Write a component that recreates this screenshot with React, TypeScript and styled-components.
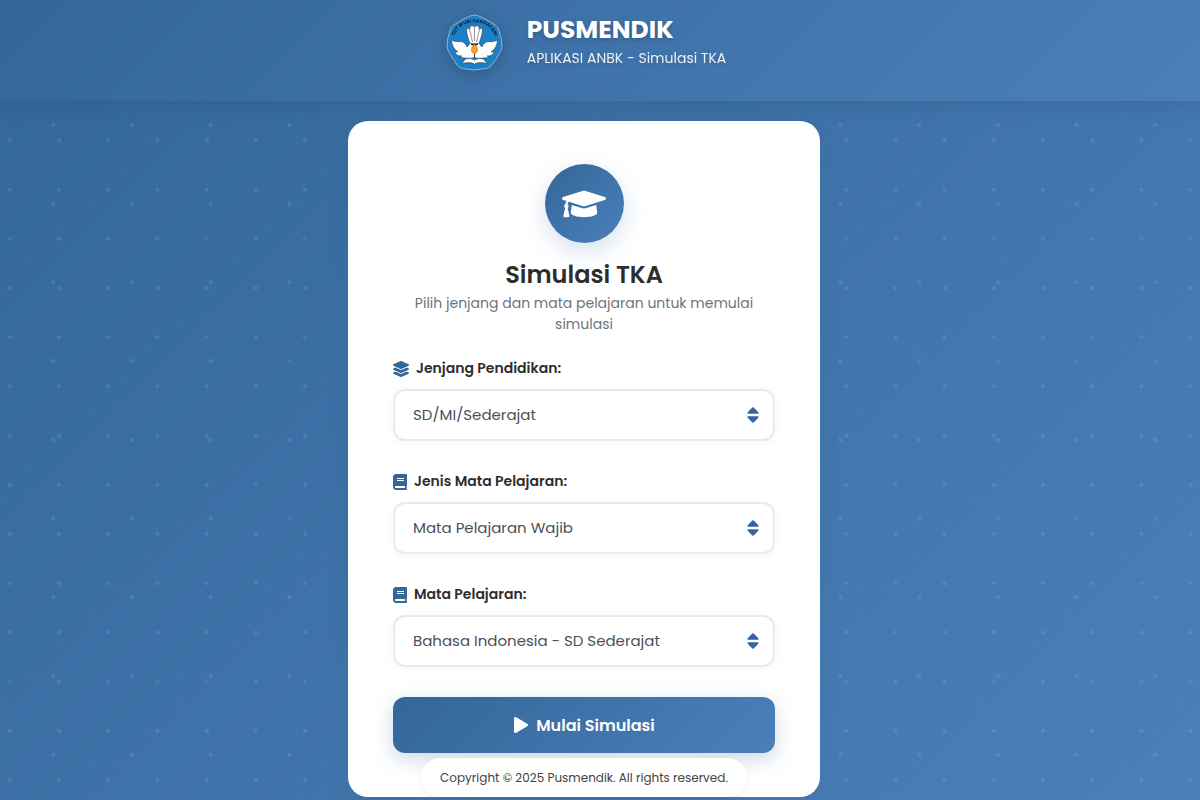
import React from "react";
import styled, { createGlobalStyle } from "styled-components";
import type { IconType } from "react-icons";
import { FaBook, FaGraduationCap, FaLayerGroup, FaPlay, FaSort } from "react-icons/fa";

const GlobalStyle = createGlobalStyle`
  *, *::before, *::after { box-sizing: border-box; }
  body {
    margin: 0;
    font-family: Poppins, Inter, "Open Sans", sans-serif;
    color: #2d2d2d;
  }
`;

const brandGradient = "linear-gradient(135deg, #336799 0%, #4a7fba 100%)";

const Page = styled.div`
  min-height: 100vh;
  display: flex;
  flex-direction: column;
  background: ${brandGradient};
`;

const Header = styled.header`
  position: relative;
  z-index: 1;
  display: flex;
  justify-content: center;
  padding: 14px 28px 30px 0;
  background: ${brandGradient};
  box-shadow: 0 4px 20px rgba(0, 0, 0, 0.1);
`;

const Brand = styled.div`
  display: flex;
  align-items: flex-start;
  gap: 24px;
`;

const Logo = styled.svg`
  width: 57px;
  height: 57px;
  filter: drop-shadow(0 4px 8px rgba(0, 0, 0, 0.2));
`;

const BrandText = styled.div`
  color: #fff;
  text-shadow: 0 2px 4px rgba(0, 0, 0, 0.2);
`;

const BrandName = styled.h1`
  margin: 0;
  font-size: 25px;
  line-height: 32px;
  font-weight: 700;
`;

const BrandSub = styled.p`
  margin: 0;
  padding-top: 2px;
  font-size: 14px;
  line-height: 20px;
  opacity: 0.9;
`;

const Main = styled.main`
  position: relative;
  flex: 1;
  display: flex;
  justify-content: center;
  align-items: flex-start;
  padding: 20px 32px 3px 0;
`;

const Dots = styled.svg`
  position: absolute;
  inset: 0;
  width: 100%;
  height: 100%;
`;

const Card = styled.section`
  position: relative;
  width: 100%;
  max-width: 472px;
  display: flex;
  flex-direction: column;
  align-items: center;
  padding: 43px 45px 0;
  border-radius: 20px;
  background: #fff;
  box-shadow: 0 8px 30px rgba(0, 0, 0, 0.04);
`;

const Emblem = styled.div`
  width: 79px;
  height: 79px;
  display: flex;
  align-items: center;
  justify-content: center;
  border-radius: 50%;
  color: #fff;
  font-size: 44px;
  background: ${brandGradient};
  box-shadow: 0 8px 25px rgba(51, 102, 153, 0.2);
`;

const Title = styled.h2`
  margin: 16px 0 0;
  font-size: 24px;
  line-height: 32px;
  font-weight: 600;
`;

const Lead = styled.p`
  margin: 2px 0 0;
  padding: 0 16px;
  font-size: 14px;
  line-height: 21px;
  text-align: center;
  color: #6c757d;
`;

const Form = styled.form`
  width: 100%;
  display: flex;
  flex-direction: column;
  gap: 30px;
  margin-top: 23px;
`;

const Field = styled.div`
  display: flex;
  flex-direction: column;
  gap: 10px;
`;

const Label = styled.label<{ $iconWidth: number }>`
  display: flex;
  align-items: center;
  gap: 7px;
  font-size: 14px;
  line-height: 21px;
  font-weight: 600;

  svg {
    width: ${({ $iconWidth }) => $iconWidth}px;
    height: 16px;
    color: #336699;
  }
`;

const SelectBox = styled.div`
  position: relative;

  svg {
    position: absolute;
    right: 12px;
    top: 50%;
    transform: translateY(-50%);
    color: #336699;
    font-size: 20px;
    pointer-events: none;
  }
`;

const Select = styled.select`
  display: block;
  width: 100%;
  height: 52px;
  padding: 0 40px 2px 18px;
  border: 2px solid #e6ebf3;
  border-radius: 12px;
  appearance: none;
  background: #fff;
  color: #495057;
  font-family: inherit;
  font-size: 15px;
  box-shadow: 0 2px 8px rgba(51, 102, 153, 0.06);
`;

const StartButton = styled.button`
  display: flex;
  align-items: center;
  justify-content: center;
  gap: 7px;
  height: 56px;
  border: 0;
  border-radius: 12px;
  color: #fff;
  font-family: inherit;
  font-size: 16px;
  font-weight: 600;
  background: ${brandGradient};
  box-shadow: 0 6px 20px rgba(51, 102, 153, 0.25);
`;

const Footer = styled.footer`
  position: relative;
  margin-top: 5px;
  padding: 0 19px;
  border-radius: 20px;
  background: #fff;
  box-shadow: 0 2px 10px rgba(0, 0, 0, 0.06);
  font-size: 12px;
  line-height: 39px;
  color: #444;
  white-space: nowrap;
`;

type FieldData = { id: string; label: string; icon: IconType; iconWidth: number; value: string };

const fields: FieldData[] = [
  { id: "jenjang", label: "Jenjang Pendidikan:", icon: FaLayerGroup, iconWidth: 16, value: "SD/MI/Sederajat" },
  { id: "jenis", label: "Jenis Mata Pelajaran:", icon: FaBook, iconWidth: 14, value: "Mata Pelajaran Wajib" },
  { id: "mapel", label: "Mata Pelajaran:", icon: FaBook, iconWidth: 14, value: "Bahasa Indonesia - SD Sederajat" },
];

function DotPattern() {
  return (
    <Dots aria-hidden="true">
      <defs>
        <pattern id="dots-large" width="50" height="50" patternUnits="userSpaceOnUse" patternTransform="scale(.984)">
          <circle cx="10" cy="40" r="2.1" fill="#fff" fillOpacity=".1" />
        </pattern>
        <pattern id="dots-medium" width="80" height="80" patternUnits="userSpaceOnUse" patternTransform="scale(.984)">
          <rect x="52.3" y="22.5" width="3.6" height="3.6" fill="#fff" fillOpacity=".1" />
        </pattern>
        <pattern id="dots-small" width="30" height="30" patternUnits="userSpaceOnUse" patternTransform="scale(.984)">
          <circle cx="2" cy="12.5" r="1.1" fill="#fff" fillOpacity=".06" />
        </pattern>
      </defs>
      <rect width="100%" height="100%" fill="url(#dots-large)" />
      <rect width="100%" height="100%" fill="url(#dots-medium)" />
      <rect width="100%" height="100%" fill="url(#dots-small)" />
    </Dots>
  );
}

function Crest() {
  return (
    <Logo viewBox="0 0 57 57" role="img" aria-label="Tut Wuri Handayani">
      <defs>
        <path id="motto-arc" d="M7 25.500 Q12 8.500 28.500 8.500 Q45 8.500 50 25.500" />
      </defs>
      <path
        d="M28.500 1 Q35 1.500 50 11.500 Q52 13 52.500 15 Q56 25 56 32 Q56 35 54 38 Q50 46 45 52 Q43 54 40 54.500 Q28.500 57.500 17 54.500 Q14 54 12 52 Q7 46 3 38 Q1 35 1 32 Q1 25 4.500 15 Q5 13 7 11.500 Q22 1.500 28.500 1Z"
        fill="#1c80c8"
        stroke="#8db3d6"
        strokeWidth="1"
      />
      <text fontFamily="Inter, sans-serif" fontSize="4.6" fontWeight="800" fill="#10202c" textAnchor="middle">
        <textPath href="#motto-arc" startOffset="50%">TUT WURI HANDAYANI</textPath>
      </text>
      <g fill="#fff" stroke="#2b2b2b" strokeWidth=".5" strokeLinejoin="round">
        <path d="M20.500 14 L23.500 15 L25 11.500 L28.500 12.500 L32 11.500 L33.500 15 L36.500 14 L36 20 L33 30 H24 L21 20Z" />
        <path d="M23.500 15 L26.500 28 M33.500 15 L30.500 28 M28.500 13 V27" fill="none" />
        <path d="M5.500 26 Q9 28.500 15 27.500 Q20 28.500 21 33 Q23.500 31 24 28.500 L28.500 33 V43.500 Q24 45 20 44 L13 43.500 L16 42 Q10 42 9 38 L12 38 Q6 34 5.500 26Z" />
        <path d="M51.500 26 Q48 28.500 42 27.500 Q37 28.500 36 33 Q33.500 31 33 28.500 L28.500 33 V43.500 Q33 45 37 44 L44 43.500 L41 42 Q47 42 48 38 L45 38 Q51 34 51.500 26Z" />
        <path d="M16 49.500 L19.500 45 Q25 43.500 28.500 46 Q32 43.500 37.500 45 L41 49.500 Q33 47.500 28.500 50 Q24 47.500 16 49.500Z" />
      </g>
      <path d="M25 29.500 H32 V31 H25Z" fill="#2b2b2b" />
      <path d="M28.500 30 Q32 34 31.500 36.500 Q30.500 39.500 28.500 39.500 Q26.500 39.500 25.500 36.500 Q25 34 28.500 30Z" fill="#f5a623" stroke="#a86412" strokeWidth=".6" />
      <path d="M28.500 40 V44" stroke="#2b2b2b" strokeWidth=".8" />
    </Logo>
  );
}

export default function App() {
  return (
    <>
      <GlobalStyle />
      <Page>
        <Header>
          <Brand>
            <Crest />
            <BrandText>
              <BrandName>PUSMENDIK</BrandName>
              <BrandSub>APLIKASI ANBK - Simulasi TKA</BrandSub>
            </BrandText>
          </Brand>
        </Header>
        <Main>
          <DotPattern />
          <Card>
            <Emblem>
              <FaGraduationCap />
            </Emblem>
            <Title>Simulasi TKA</Title>
            <Lead>Pilih jenjang dan mata pelajaran untuk memulai simulasi</Lead>
            <Form onSubmit={(event) => event.preventDefault()}>
              {fields.map(({ id, label, icon: Icon, iconWidth, value }) => (
                <Field key={id}>
                  <Label htmlFor={id} $iconWidth={iconWidth}>
                    <Icon />
                    {label}
                  </Label>
                  <SelectBox>
                    <Select id={id} defaultValue={value}>
                      <option>{value}</option>
                    </Select>
                    <FaSort />
                  </SelectBox>
                </Field>
              ))}
              <StartButton type="submit">
                <FaPlay />
                Mulai Simulasi
              </StartButton>
            </Form>
            <Footer>Copyright © 2025 Pusmendik. All rights reserved.</Footer>
          </Card>
        </Main>
      </Page>
    </>
  );
}
